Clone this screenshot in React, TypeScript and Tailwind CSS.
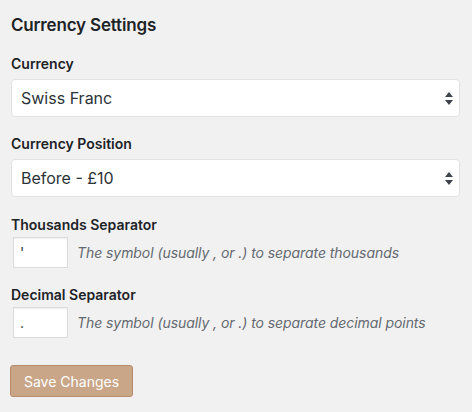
import React from 'react';

const font = { fontFamily: 'Inter, "Liberation Sans", Arial, sans-serif' };

const Arrows = () => (
  <svg width="8" height="13" viewBox="0 0 8 13" className="text-[#3c434a]">
    <path d="M4 0 L8 5 L0 5 Z" fill="currentColor" />
    <path d="M0 8 L8 8 L4 13 Z" fill="currentColor" />
  </svg>
);

const SelectBox = ({ value }: { value: string }) => (
  <div className="flex items-center justify-between h-[38px] w-[449px] bg-white border border-[#e2e2e2] rounded-[4px] pl-[9px] pr-[6px] text-[16px] text-[#2c3338]">
    <span>{value}</span>
    <Arrows />
  </div>
);

const SmallInput = ({ value, help }: { value: string; help: string }) => (
  <div className="flex items-center gap-[9px] ml-[2px] mt-[2px]">
    <div className="w-[55px] h-[31px] bg-white border border-[#dcdcde] shadow-[inset_0_1px_2px_rgba(0,0,0,0.07)] flex items-center pl-[6px] text-[14px] text-[#2c3338]">
      {value}
    </div>
    <span className="italic text-[14px] tracking-[-0.005em] text-[#646970]">{help}</span>
  </div>
);

const Label = ({ children, top }: { children: React.ReactNode; top: string }) => (
  <div className={`${top} text-[14px] leading-[20px] font-semibold text-[#1d2327]`}>{children}</div>
);

export default function App() {
  return (
    <div className="min-h-[412px] w-[472px] bg-[#f1f1f1] px-[11px] pb-[10px]" style={font}>
      <h2 className="pt-[13px] text-[17px] leading-[24px] tracking-[-0.01em] font-semibold text-[#1d2327]">Currency Settings</h2>

      <Label top="mt-[17px] mb-[5px]">Currency</Label>
      <SelectBox value="Swiss Franc" />

      <Label top="mt-[17px] mb-[5px]">Currency Position</Label>
      <SelectBox value="Before - £10" />

      <Label top="mt-[18px]">Thousands Separator</Label>
      <SmallInput value="'" help="The symbol (usually , or .) to separate thousands" />

      <Label top="mt-[17px]">Decimal Separator</Label>
      <SmallInput value="." help="The symbol (usually , or .) to separate decimal points" />

      <button className="mt-[27px] -ml-[1px] h-[32px] w-[123px] rounded-[3px] bg-[#c9a688] border border-[#b98b6b] text-white text-[14px]">
        Save Changes
      </button>
    </div>
  );
}
